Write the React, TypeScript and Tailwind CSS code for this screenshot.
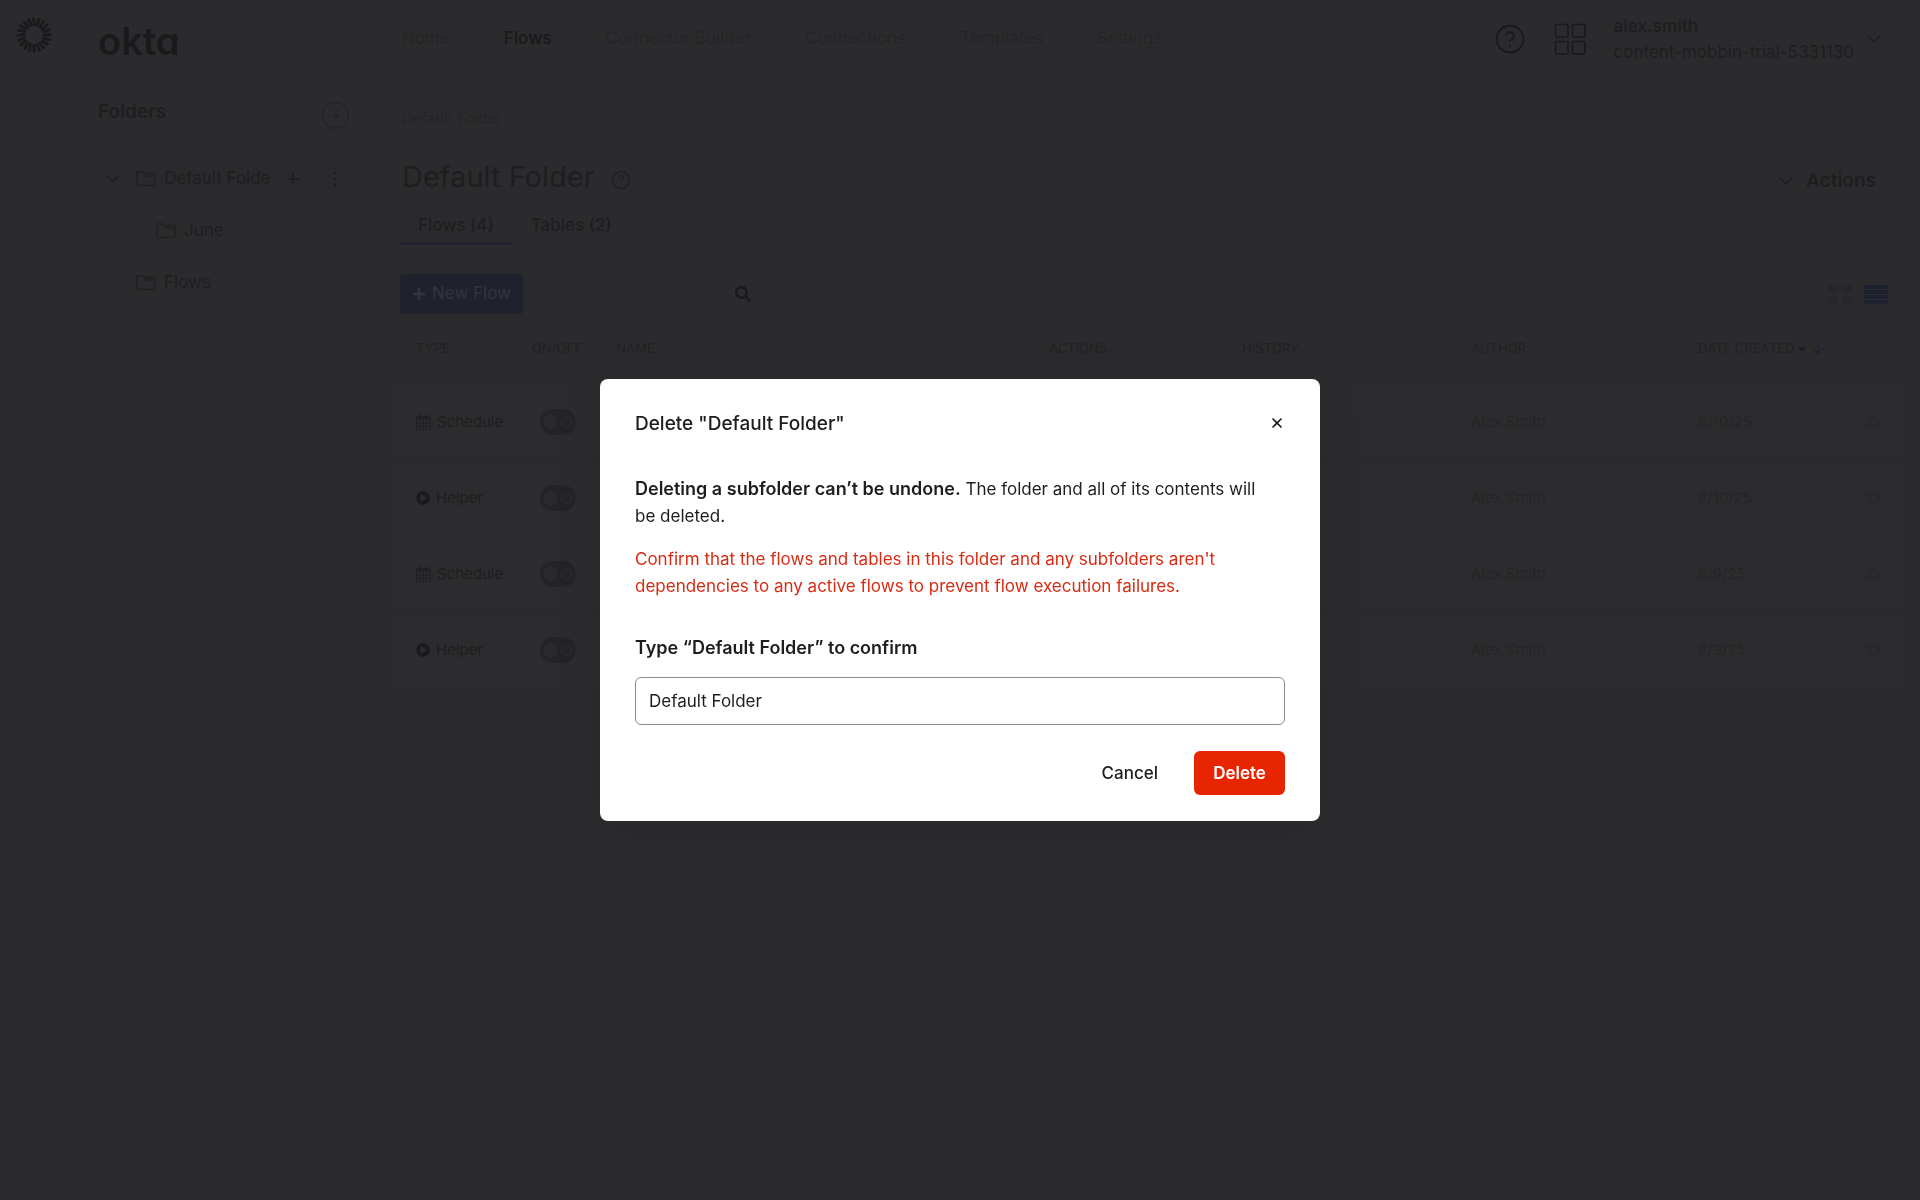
import { useState } from "react";
import { ArrowDown, ChevronDown, CircleHelp, Plus, X } from "lucide-react";
import { FaCaretDown, FaCog, FaPlayCircle, FaPlus, FaSearch } from "react-icons/fa";

type Flow = {
  id: number;
  type: "Schedule" | "Helper";
  author: string;
  created: string;
};

const navItems = ["Home", "Flows", "Connector Builder", "Connections", "Templates", "Settings"];

const flows: Flow[] = [
  { id: 1, type: "Schedule", author: "Alex Smith", created: "6/10/25" },
  { id: 2, type: "Helper", author: "Alex Smith", created: "6/10/25" },
  { id: 3, type: "Schedule", author: "Alex Smith", created: "6/9/25" },
  { id: 4, type: "Helper", author: "Alex Smith", created: "6/9/25" },
];

function SunMark() {
  const rays = Array.from({ length: 20 }, (_, i) => i * 18);
  return (
    <svg width="36" height="36" viewBox="0 0 36 36" stroke="#1a1a1c" strokeWidth="2.8">
      {rays.map((angle) => (
        <line key={angle} x1="18.6" y1="9" x2="17.4" y2="0.5" transform={`rotate(${angle} 18 18)`} />
      ))}
    </svg>
  );
}

function FolderIcon() {
  return (
    <svg width="20" height="16" viewBox="0 0 20 16" fill="none" stroke="#202022" strokeWidth="1.3">
      <path d="M1 1h6l3 4h9v7.5a2 2 0 0 1-2 2H3a2 2 0 0 1-2-2z" />
      <path d="M8.5 2.5H19V5" />
    </svg>
  );
}

function CalendarIcon() {
  return (
    <svg width="15" height="16" viewBox="0 0 15 16" fill="none" stroke="#202022">
      <rect x="0.5" y="2.5" width="14" height="13" rx="1" />
      <path d="M1 4h13" strokeWidth="3" />
      <path d="M4 0.5v3M11 0.5v3" strokeWidth="2" />
      <path d="M1 9h13M1 12h13M4.5 6v9M7.5 6v9M10.5 6v9" strokeWidth="0.8" />
    </svg>
  );
}

function Toggle() {
  return (
    <button aria-label="Toggle flow" className="flex h-[26px] w-9 items-center gap-1 rounded-full bg-[#242426] px-1">
      <span className="size-4 rounded-full bg-[#2a2a2c]" />
      <span className="size-3 rounded-full border-2 border-[#2a2a2c]" />
    </button>
  );
}

function Sidebar() {
  return (
    <aside className="w-[305px] shrink-0">
      <div className="flex h-[76px] items-center pt-1.5 pl-[26px] text-[38px] font-semibold text-[#1a1a1c] [font-feature-settings:'cv11']">
        okta
      </div>
      <div className="flex h-[77px] items-start justify-between pt-[22px] pr-7 pl-[26px]">
        <h2 className="text-[19px] font-semibold leading-7">Folders</h2>
        <button aria-label="Add folder" className="mt-1 flex size-[27px] items-center justify-center rounded-full border border-[#202023]">
          <Plus size={12} strokeWidth={1.5} />
        </button>
      </div>

      {/* Folder tree */}
      <ul className="text-[17px]">
        <li className="flex h-[52px] items-center bg-[#2a2a2c] pr-[41px] pl-[31px]">
          <ChevronDown size={20} strokeWidth={1.5} />
          <span className="mr-2 ml-[13px]"><FolderIcon /></span>
          <span className="w-[108px] whitespace-nowrap">Default Folde</span>
          <button aria-label="Add subfolder" className="ml-3"><Plus size={18} strokeWidth={2} /></button>
          <button aria-label="Folder menu" className="ml-auto flex flex-col gap-1">
            <span className="size-0.5 bg-[#1e1e20]" />
            <span className="size-0.5 bg-[#1e1e20]" />
            <span className="size-0.5 bg-[#1e1e20]" />
          </button>
        </li>
        <li className="flex h-[52px] items-center gap-2 pl-[84px]"><FolderIcon />June</li>
        <li className="flex h-[52px] items-center gap-2 pl-16"><FolderIcon />Flows</li>
      </ul>
    </aside>
  );
}

function TopBar() {
  return (
    <header className="flex h-[78px] items-center justify-between pr-[34px] pl-[25px] text-[17px]">
      <nav className="flex gap-[54px]">
        {navItems.map((item) => (
          <a
            key={item}
            href="#"
            className={item === "Flows" ? "font-semibold text-[#1a1a1c]" : "text-[#252527]"}
          >
            {item}
          </a>
        ))}
      </nav>
      <div className="flex items-center">
        <button aria-label="Help"><CircleHelp size={32} strokeWidth={1.5} color="#1a1a1c" /></button>
        <button aria-label="Apps" className="mx-7">
          <svg width="32" height="32" viewBox="0 0 32 32" fill="none" stroke="#1a1a1c" strokeWidth="1.6">
            <rect x="1.5" y="1.5" width="12.5" height="12.5" rx="1" />
            <rect x="18.5" y="1.5" width="12.5" height="12.5" rx="1" />
            <rect x="1.5" y="18.5" width="12.5" height="12.5" rx="1" />
            <rect x="18.5" y="18.5" width="12.5" height="12.5" rx="1" />
          </svg>
        </button>
        <button className="flex items-center gap-2 text-left leading-[26px]">
          <span>
            <span className="block font-semibold">alex.smith</span>
            <span className="block">content-mobbin-trial-5331130</span>
          </span>
          <ChevronDown size={24} strokeWidth={1.5} />
        </button>
      </div>
    </header>
  );
}

function FlowTable() {
  return (
    <table className="w-full table-fixed border-separate border-spacing-x-0 border-spacing-y-2 text-left text-[15px]">
      <colgroup>
        <col className="w-[140px]" />
        <col className="w-[84px]" />
        <col />
        <col className="w-[193px]" />
        <col className="w-[229px]" />
        <col className="w-[227px]" />
        <col className="w-[166px]" />
        <col className="w-[42px]" />
      </colgroup>
      <thead className="text-[13px] text-[#222224]">
        <tr className="h-[58px]">
          <th className="pb-[5px] pl-6 font-medium">TYPE</th>
          <th className="pb-[5px] font-medium">ON/OFF</th>
          <th className="pb-[5px] font-medium">NAME</th>
          <th className="pb-[5px] font-medium">ACTIONS</th>
          <th className="pb-[5px] font-medium">HISTORY</th>
          <th className="pb-[5px] font-medium">AUTHOR</th>
          <th className="pb-[5px] font-medium">
            <span className="flex items-center gap-0.5 whitespace-nowrap">
              DATE CREATED
              <FaCaretDown size={12} color="#1a1a1c" />
              <ArrowDown size={17} strokeWidth={1.5} color="#1e2030" />
            </span>
          </th>
          <th></th>
        </tr>
      </thead>
      <tbody>
        {flows.map((flow) => (
          <tr key={flow.id} className="h-[68px] bg-[#2c2c2e]">
            <td className="pl-6">
              <span className="flex items-center gap-1.5">
                {flow.type === "Schedule" ? <CalendarIcon /> : <FaPlayCircle size={14} color="#1a1a1c" />}
                {flow.type}
              </span>
            </td>
            <td className="pl-2"><Toggle /></td>
            <td></td>
            <td></td>
            <td></td>
            <td className="text-[#252527]">{flow.author}</td>
            <td className="text-[#252527]">{flow.created}</td>
            <td className="pl-0.5"><FaCog size={16} color="#29292b" /></td>
          </tr>
        ))}
      </tbody>
    </table>
  );
}

function DeleteDialog() {
  const [value, setValue] = useState("Default Folder");

  return (
    <div className="fixed inset-0 z-40 flex items-center justify-center">
      <div
        role="dialog"
        aria-labelledby="dialog-title"
        className="w-[720px] rounded-lg bg-white px-[35px] pt-[30px] pb-[26px] text-[17px] leading-[27px] text-[#1d1d21] shadow-[0_12px_56px_rgba(0,0,0,0.06)]"
      >
        <div className="flex h-7 items-center justify-between">
          <h3 id="dialog-title" className="text-[19px] font-medium">Delete "Default Folder"</h3>
          <button aria-label="Close"><X size={16} strokeWidth={2.5} /></button>
        </div>

        <p className="mt-[38px] pr-4">
          <strong className="text-lg leading-[27px] font-semibold">Deleting a subfolder can’t be undone.</strong> The
          folder and all of its contents will be deleted.
        </p>
        <p className="mt-4 pr-4 text-[#d92b12]">
          Confirm that the flows and tables in this folder and any subfolders aren't dependencies to any active flows
          to prevent flow execution failures.
        </p>

        <label htmlFor="confirm" className="mt-[34px] block text-lg leading-[27px] font-semibold">
          Type “Default Folder” to confirm
        </label>
        <input
          id="confirm"
          type="text"
          value={value}
          onChange={(e) => setValue(e.target.value)}
          className="mt-4 block h-12 w-full rounded-md border border-[#8c8c8c] px-[13px] outline-none"
        />

        <div className="mt-[26px] flex justify-end gap-4">
          <button className="h-11 rounded-md px-5 font-medium">Cancel</button>
          <button className="h-11 w-[91px] rounded-md bg-[#e72500] font-semibold text-white">Delete</button>
        </div>
      </div>
    </div>
  );
}

export default function App() {
  return (
    <div className="flex min-h-screen bg-[#2b2b2d] font-[Inter,sans-serif] text-[#1e1e20]">
      <div className="w-[72px] shrink-0 pt-[17px] pl-4">
        <SunMark />
      </div>
      <Sidebar />

      <main className="min-w-0 flex-1">
        <TopBar />
        <div className="pr-[14px] pl-[15px]">
          <div className="pr-[18px] pl-2">
            <p className="pt-[29px] pl-0.5 text-[15px] leading-6 text-[#252527]">Default Folder</p>
            <div className="mt-[22px] flex h-14 items-center justify-between pr-3 pl-0.5">
              <div className="flex items-center gap-4 pb-2">
                <h1 className="text-[29px]">Default Folder</h1>
                <CircleHelp size={20} strokeWidth={1.5} className="mt-1.5" />
              </div>
              <button className="flex items-center gap-2 text-[19px] font-semibold">
                <ChevronDown size={24} strokeWidth={1.5} />
                Actions
              </button>
            </div>

            {/* Tabs */}
            <div className="flex text-[17px] font-medium">
              <button className="h-9 border-b-[3px] border-[#20222f] px-[18px]">Flows (4)</button>
              <button className="h-9 border-b-[3px] border-transparent px-[19px]">Tables (2)</button>
            </div>

            {/* Toolbar */}
            <div className="mt-[29px] flex items-center justify-between">
              <div className="flex gap-[14px]">
                <button className="flex h-10 w-[123px] items-center justify-center gap-1.5 rounded bg-[#1f212c] text-[17px] text-[#34353c]">
                  <FaPlus size={14} />
                  New Flow
                </button>
                <label className="flex h-10 w-[223px] items-center rounded border border-[#2a2a2c] pr-2">
                  <input type="search" aria-label="Search flows" className="min-w-0 flex-1 outline-none" />
                  <FaSearch size={16} color="#1a1a1c" />
                </label>
              </div>
              <div className="flex gap-3">
                <button aria-label="Grid view" className="grid h-[19px] w-6 grid-cols-2 gap-1">
                  <span className="bg-[#272729]" />
                  <span className="bg-[#272729]" />
                  <span className="bg-[#272729]" />
                  <span className="bg-[#272729]" />
                </button>
                <button aria-label="List view" className="flex h-[19px] w-6 flex-col justify-between">
                  <span className="h-1 w-full bg-[#1e2230]" />
                  <span className="h-1 w-full bg-[#1e2230]" />
                  <span className="h-1 w-full bg-[#1e2230]" />
                  <span className="h-1 w-full bg-[#1e2230]" />
                </button>
              </div>
            </div>
          </div>

          <FlowTable />
        </div>
      </main>

      <DeleteDialog />
    </div>
  );
}
